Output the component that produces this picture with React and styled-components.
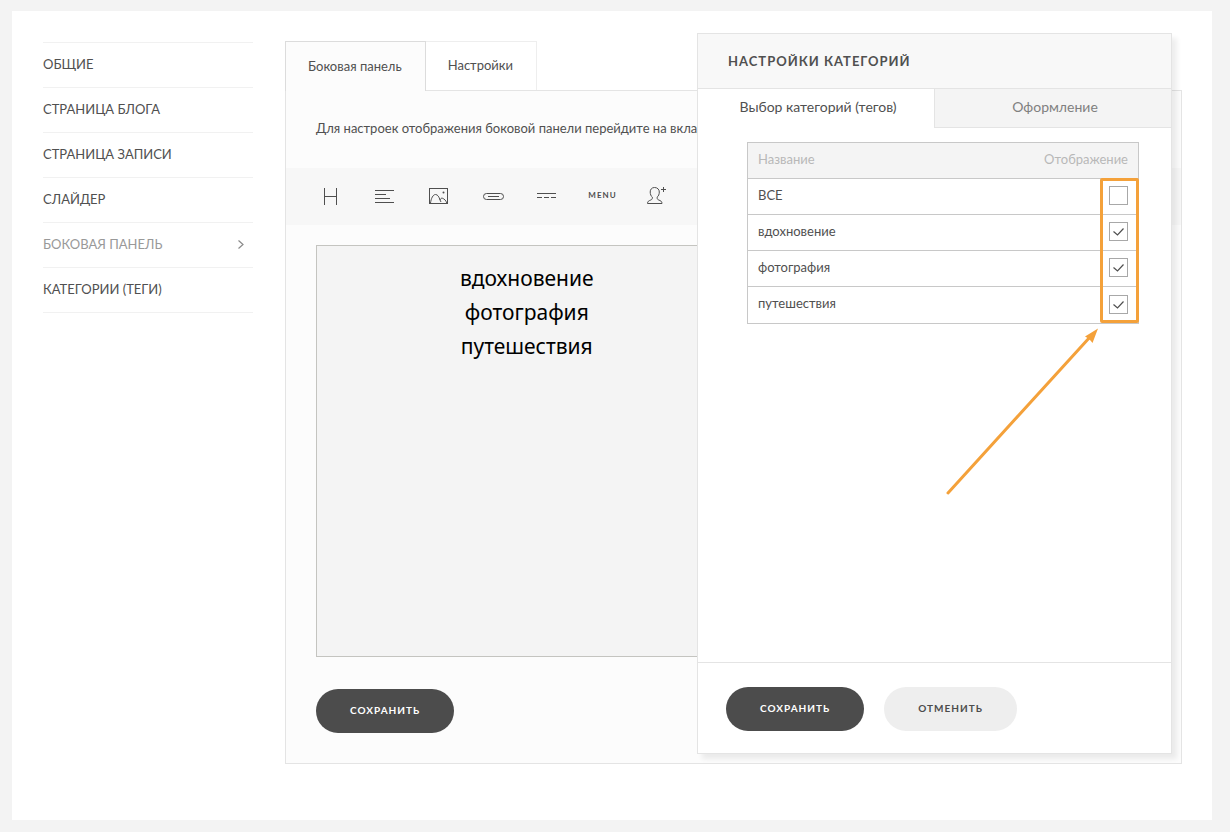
import React, { useState } from "react"
import styled, { createGlobalStyle, css } from "styled-components"


const GlobalStyle = createGlobalStyle`
    * {
        box-sizing: border-box;
    }
    body {
        margin: 0;
        background-color: #f3f3f3;
        color: #505050;
        font-family: "Lato", "Open Sans", sans-serif;
        font-size: 13px;
        line-height: 20px;
    }
    button, input {
        font: inherit;
        color: inherit;
    }
`;

const Page = styled.div`
    padding: 11px 18px 12px 12px;
    min-height: 100vh;
    display: flex;
`;

const Card = styled.div`
    flex: 1;
    display: flex;
    align-items: flex-start;
    gap: 32px;
    padding: 30px 30px 56px 31px;
    background-color: white;
`;

const SideNav = styled.nav`
    flex: 0 0 210px;
    display: flex;
    flex-direction: column;
    margin-top: 1px;
    border-top: 1px solid #f1f1f1;
`;

const SideLink = styled.a`
    display: flex;
    align-items: center;
    justify-content: space-between;
    height: 45px;
    padding: 0 9px 2px 0;
    border-bottom: 1px solid #f1f1f1;
    color: ${props => props.$active ? "#999999" : "#505050"};
    text-decoration: none;
    text-transform: uppercase;
`;

const Main = styled.main`
    position: relative;
    flex: 1;
    min-width: 0;
`;

const Tabs = styled.div`
    display: flex;
    height: 49px;
`;

const Tab = styled.button`
    height: ${props => props.$active ? "50px" : "49px"};
    padding: 0 23px 2px 22px;
    border: 1px solid ${props => props.$active ? "#dcdcdc" : "#eeeeee"};
    border-bottom: none;
    border-left-width: ${props => props.$active ? "1px" : "0"};
    background-color: ${props => props.$active ? "#fcfcfc" : "white"};
    z-index: ${props => props.$active ? 1 : 0};
    cursor: pointer;
`;

const Panel = styled.section`
    border: 1px solid #e4e4e4;
    background-color: #fcfcfc;
    padding-bottom: 30px;
`;

const Hint = styled.p`
    margin: 0;
    padding: 27px 30px 30px;
    white-space: nowrap;
    overflow: hidden;
`;

const Toolbar = styled.div`
    display: flex;
    height: 57px;
    padding-left: 18px;
    background-color: #f7f7f7;
`;

const Tool = styled.button`
    display: flex;
    align-items: center;
    justify-content: center;
    width: 54px;
    height: 57px;
    padding: 0;
    border: none;
    background: none;
    color: #4f4f4f;
    font-size: 8px;
    font-weight: 700;
    letter-spacing: 1px;
    cursor: pointer;
`;

const ToolText = styled.span`
    padding: 0 0 4px 3px;
`;

const Preview = styled.div`
    margin: 20px 24px 32px 30px;
    min-height: 412px;
    padding: 15px 0;
    border: 1px solid #c4c4c0;
    background-color: #f4f4f4;
`;

const TagList = styled.ul`
    width: 50%;
    margin: 0;
    padding: 0;
    list-style: none;
    text-align: center;
    color: black;
    font-family: "Noto Sans", sans-serif;
    font-size: 21px;
    line-height: 34px;
`;

const Button = styled.button`
    height: 44px;
    padding: 0 34px 2px;
    border: none;
    border-radius: 22px;
    background-color: ${props => props.$light ? "#eeeeee" : "#4c4c4c"};
    color: ${props => props.$light ? "#4c4c4c" : "white"};
    font-size: 10px;
    font-weight: 700;
    letter-spacing: 1px;
    text-transform: uppercase;
    cursor: pointer;
`;

const PanelActions = styled.div`
    padding: 0 30px;
`;

/* --- Category settings window, lies over the panel --- */

const Modal = styled.section`
    position: absolute;
    z-index: 2;
    top: -8px;
    right: 10px;
    bottom: 10px;
    width: 475px;
    display: flex;
    flex-direction: column;
    border: 1px solid #e4e4e4;
    background-color: white;
    box-shadow: 5px 5px 5px rgba(0, 0, 0, 0.07);
`;

const ModalTitle = styled.h2`
    margin: 0;
    padding: 17px 30px;
    background-color: #f8f8f8;
    border-bottom: 1px solid #e4e4e4;
    font-size: 13px;
    line-height: 20px;
    font-weight: 700;
    letter-spacing: 1px;
    text-transform: uppercase;
`;

const ModalTabs = styled.div`
    display: flex;
`;

const ModalTab = styled.button`
    flex: 1;
    height: 39px;
    padding: 0 0 2px 4px;
    border: none;
    border-bottom: 1px solid white;
    background-color: white;
    font-size: 14px;
    cursor: pointer;
    ${props => !props.$active && css`
        border-left: 1px solid #e4e4e4;
        border-bottom: 1px solid #e4e4e4;
        background-color: #f4f4f4;
        color: #808080;
    `}
`;

const ModalBody = styled.div`
    flex: 1;
    padding: 14px 32px 0 49px;
`;

const ModalActions = styled.div`
    display: flex;
    gap: 20px;
    padding: 24px 28px 22px;
    border-top: 1px solid #e4e4e4;
`;

const TableWrapper = styled.div`
    position: relative;
`;

const Table = styled.table`
    width: 100%;
    border: 1px solid #c8c8c8;
    border-collapse: collapse;
`;

const Row = styled.tr`
    height: 36px;
    border-bottom: 1px solid #c8c8c8;

    tbody &:last-child {
        height: 37px;
    }
`;

const HeadCell = styled.th`
    padding: 0 10px 3px;
    background-color: #f4f4f4;
    color: #b8b8b8;
    font-weight: 400;
    text-align: ${props => props.$right ? "right" : "left"};
`;

const Cell = styled.td`
    padding: 0 10px ${props => props.$text ? "4px" : "2px"};
`;

const CheckWrapper = styled.span`
    display: grid;
    justify-content: end;

    > * {
        grid-area: 1 / 1;
    }
    svg {
        pointer-events: none;
    }
`;

const CheckInput = styled.input`
    appearance: none;
    width: 19px;
    height: 19px;
    margin: 0;
    border: 1px solid #a8a8a8;
    background-color: white;
    cursor: pointer;
`;

const Highlight = styled.div`
    position: absolute;
    top: 36px;
    right: 0;
    bottom: 1px;
    width: 39px;
    border: 3px solid #f4a13a;
    border-radius: 2px;
    pointer-events: none;
`;

const Arrow = styled.svg`
    position: absolute;
    top: 100%;
    right: 38px;
    margin-top: 2px;
    pointer-events: none;
`;


const ToolIcon = ({children}) => (
    <svg width="54" height="57" viewBox="0 0 54 57" fill="none" stroke="currentColor">{children}</svg>
)

const tools = [
    {
        name: "Заголовок",
        icon: <path d="M20.5 20v17M32.5 20v17M20.5 28.5h12" />
    },
    {
        name: "Текст",
        icon: <path d="M17 22.5h19M17 26.5h11M17 30.5h15M17 34.5h19" />
    },
    {
        name: "Изображение",
        icon: <>
            <rect x="17.5" y="20.5" width="18" height="15" />
            <path d="M18.5 35c.6-4.500 2.500-8.500 5-8.500 2.300 0 3.600 2.500 4.500 5.500.6-1.500 1.400-2 2.300-1.800 2 .6 3.700 2.400 4.500 4.800M28 32l1 2" />
            <circle cx="31.500" cy="24.500" r="1" fill="currentColor" stroke="none" />
        </>
    },
    {
        name: "Кнопка",
        icon: <>
            <rect x="17.5" y="25.5" width="20" height="6" rx="3" />
            <path d="M22 28.5h11" />
        </>
    },
    {
        name: "Разделитель",
        icon: <path d="M17 25.5h19M17 29.5h5M24 29.5h5M31 29.5h5" />
    },
    { name: "Меню", text: "MENU" },
    {
        name: "Профиль",
        icon: <path d="M26.500 19.500c-2.800 0-4.300 2-4.300 4.500 0 2.200.8 4.200 2.200 5.200 0 1.800-.4 2.300-1.600 2.800-2 .8-3.300 1.300-3.300 3.500h14.500c0-2.200-1.300-2.700-3.300-3.500-1.200-.5-1.600-1-1.600-2.800 1.400-1 2.200-3 2.200-5.200 0-2.500-1.800-4.500-4.800-4.500zM35.500 19v5M33 21.500h5" />
    },
]

const links = ["Общие", "Страница блога", "Страница записи", "Слайдер", "Боковая панель", "Категории (теги)"]

const categories = ["ВСЕ", "вдохновение", "фотография", "путешествия"]


const CategoryRow = ({name, id, checked, onChange}) => (
    <Row>
        <Cell $text><label htmlFor={id}>{name}</label></Cell>
        <Cell>
            <CheckWrapper>
                <CheckInput type="checkbox" id={id} checked={checked} onChange={onChange} />
                {checked&&(
                    <svg width="19" height="19" viewBox="0 0 19 19" fill="none" stroke="#4f4f4f" strokeWidth="1.200">
                        <path d="M4.500 9.500l4 3.500 6-6.500" />
                    </svg>
                )}
            </CheckWrapper>
        </Cell>
    </Row>
)

const CategoryModal = ({selected, toggle}) => (
    <Modal>
        <ModalTitle>Настройки категорий</ModalTitle>
        <ModalTabs>
            <ModalTab $active>Выбор категорий (тегов)</ModalTab>
            <ModalTab>Оформление</ModalTab>
        </ModalTabs>
        <ModalBody>
            <TableWrapper>
                <Table>
                    <thead>
                        <Row>
                            <HeadCell>Название</HeadCell>
                            <HeadCell $right>Отображение</HeadCell>
                        </Row>
                    </thead>
                    <tbody>
                        {categories.map((name, i) => (
                            <CategoryRow
                                key={name}
                                id={"category-" + i}
                                name={name}
                                checked={selected.includes(name)}
                                onChange={() => toggle(name)}
                            />
                        ))}
                    </tbody>
                </Table>
                <Highlight />
                <Arrow width="158" height="172" viewBox="0 0 158 172">
                    <path d="M5 167L147 11" stroke="#f4a13a" strokeWidth="3" strokeLinecap="round" />
                    <path d="M155 2.500l-13 8 2.500 1.500 3 2.500 2 2.500z" fill="#f4a13a" />
                </Arrow>
            </TableWrapper>
        </ModalBody>
        <ModalActions>
            <Button>Сохранить</Button>
            <Button $light>Отменить</Button>
        </ModalActions>
    </Modal>
)

const App = () => {
    const [selected, setSelected] = useState(["вдохновение", "фотография", "путешествия"])

    const toggle = (name) => {
        setSelected(selected.includes(name) ? selected.filter(item => item !== name) : [...selected, name])
    }

    return(
        <>
            <GlobalStyle />
            <Page>
                <Card>
                    <SideNav>
                        {links.map(link => (
                            <SideLink key={link} href="#" $active={link === "Боковая панель"}>
                                {link}
                                {link === "Боковая панель"&&(
                                    <svg width="6" height="9" viewBox="0 0 6 9" fill="none" stroke="#8a8a8a" strokeWidth="1.200">
                                        <path d="M0.500 0.500l4.500 4-4.500 4" />
                                    </svg>
                                )}
                            </SideLink>
                        ))}
                    </SideNav>
                    <Main>
                        <Tabs>
                            <Tab $active>Боковая панель</Tab>
                            <Tab>Настройки</Tab>
                        </Tabs>
                        <Panel>
                            <Hint>Для настроек отображения боковой панели перейдите на вкладку</Hint>
                            <Toolbar>
                                {tools.map(tool => (
                                    <Tool key={tool.name} aria-label={tool.name}>
                                        {tool.text ? <ToolText>{tool.text}</ToolText> : <ToolIcon>{tool.icon}</ToolIcon>}
                                    </Tool>
                                ))}
                            </Toolbar>
                            <Preview>
                                <TagList>
                                    {categories.filter(name => name !== "ВСЕ" && selected.includes(name)).map(name => (
                                        <li key={name}>{name}</li>
                                    ))}
                                </TagList>
                            </Preview>
                            <PanelActions>
                                <Button>Сохранить</Button>
                            </PanelActions>
                        </Panel>
                        <CategoryModal selected={selected} toggle={toggle} />
                    </Main>
                </Card>
            </Page>
        </>
    )
}


export default App
